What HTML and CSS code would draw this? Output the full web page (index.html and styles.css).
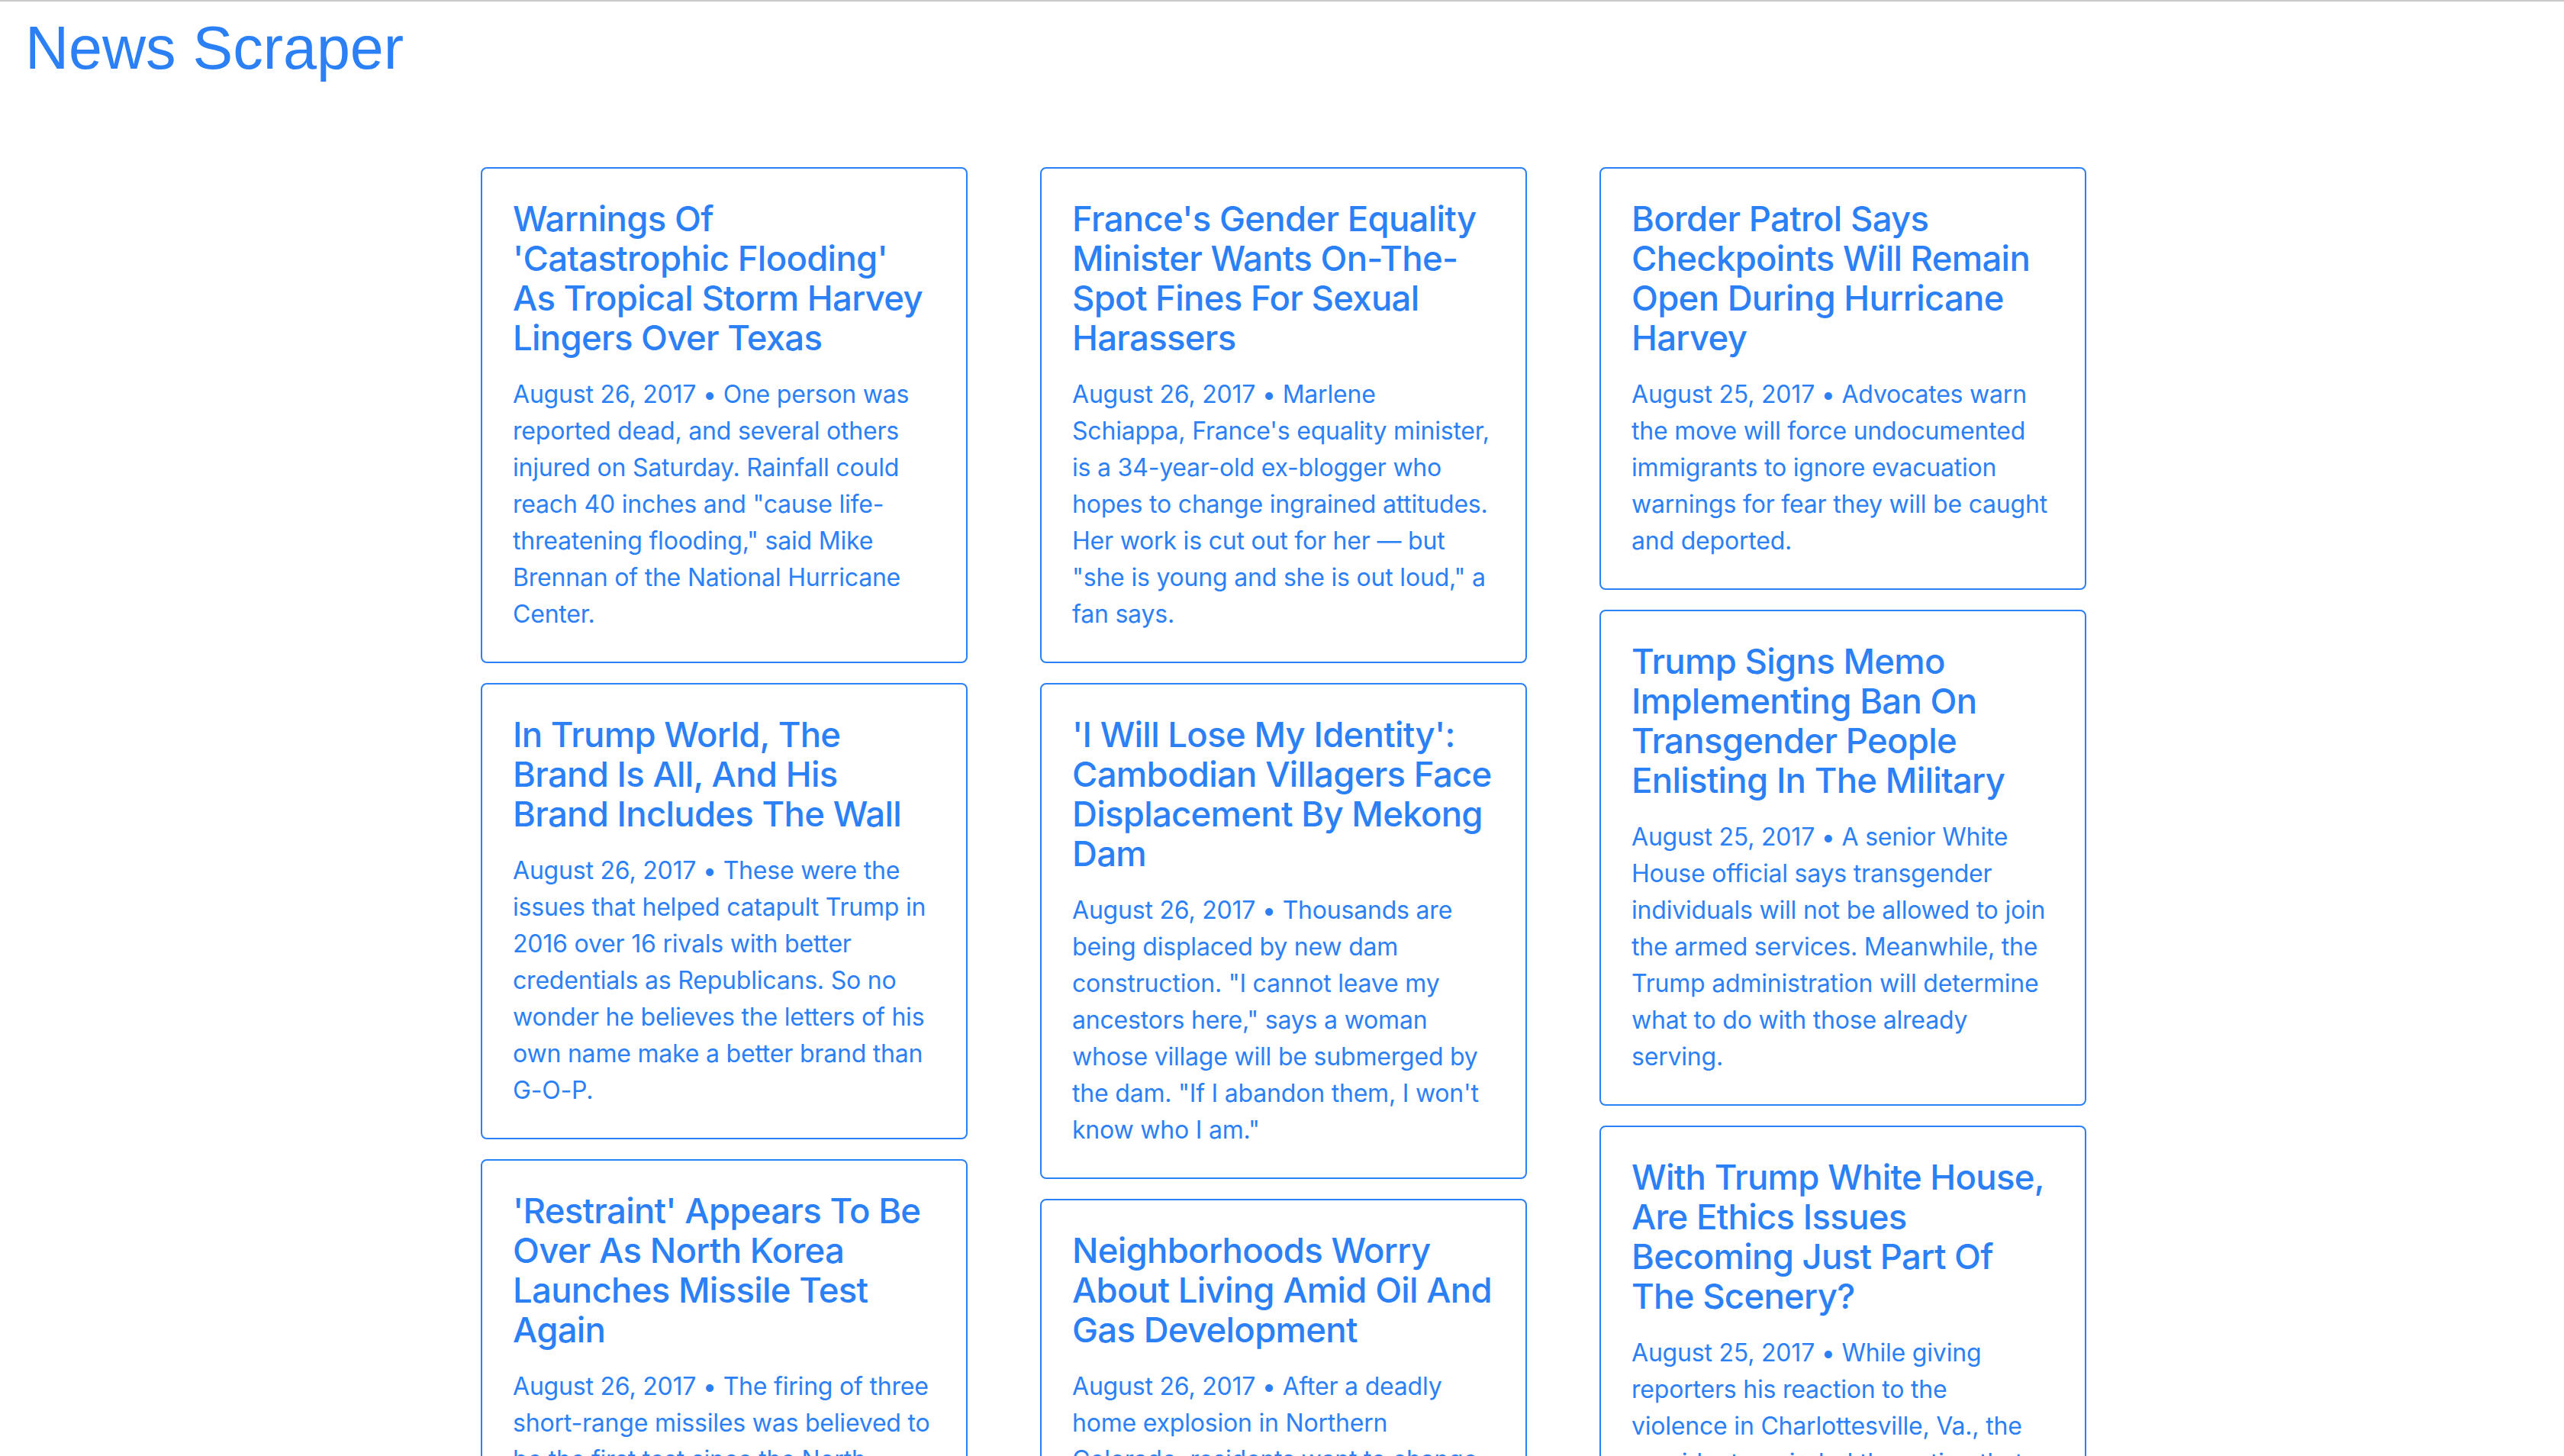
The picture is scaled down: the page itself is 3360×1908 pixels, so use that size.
FILE: index.html
```html
<!DOCTYPE html>
<html lang="en">
<head>
<meta charset="utf-8">
<title>News Scraper</title>
<link rel="stylesheet" href="styles.css">
</head>
<body>
<header class="topbar">
  <h1 class="brand">News Scraper</h1>
</header>
<main class="board">
  <div class="column">
    <article class="card">
      <h4 class="card-title">Warnings Of<br>'Catastrophic Flooding'<br>As Tropical Storm Harvey<br>Lingers Over Texas</h4>
      <p class="card-text">August 26, 2017 • One person was<br>reported dead, and several others<br>injured on Saturday. Rainfall could<br>reach 40 inches and "cause life-<br>threatening flooding," said Mike<br>Brennan of the National Hurricane<br>Center.</p>
    </article>
    <article class="card">
      <h4 class="card-title">In Trump World, The<br>Brand Is All, And His<br>Brand Includes The Wall</h4>
      <p class="card-text">August 26, 2017 • These were the<br>issues that helped catapult Trump in<br>2016 over 16 rivals with better<br>credentials as Republicans. So no<br>wonder he believes the letters of his<br>own name make a better brand than<br>G-O-P.</p>
    </article>
    <article class="card">
      <h4 class="card-title">'Restraint' Appears To Be<br>Over As North Korea<br>Launches Missile Test<br>Again</h4>
      <p class="card-text">August 26, 2017 • The firing of three<br>short-range missiles was believed to<br>be the first test since the North<br>threatened to fire missiles toward the U.S. territory of Guam.</p>
    </article>
  </div>
  <div class="column">
    <article class="card">
      <h4 class="card-title">France's Gender Equality<br>Minister Wants On-The-<br>Spot Fines For Sexual<br>Harassers</h4>
      <p class="card-text">August 26, 2017 • Marlene<br>Schiappa, France's equality minister,<br>is a 34-year-old ex-blogger who<br>hopes to change ingrained attitudes.<br>Her work is cut out for her — but<br>"she is young and she is out loud," a<br>fan says.</p>
    </article>
    <article class="card">
      <h4 class="card-title">'I Will Lose My Identity':<br>Cambodian Villagers Face<br>Displacement By Mekong<br>Dam</h4>
      <p class="card-text">August 26, 2017 • Thousands are<br>being displaced by new dam<br>construction. "I cannot leave my<br>ancestors here," says a woman<br>whose village will be submerged by<br>the dam. "If I abandon them, I won't<br>know who I am."</p>
    </article>
    <article class="card">
      <h4 class="card-title">Neighborhoods Worry<br>About Living Amid Oil And<br>Gas Development</h4>
      <p class="card-text">August 26, 2017 • After a deadly<br>home explosion in Northern<br>Colorado, residents want to change<br>how close oil and gas wells can be built to their homes.</p>
    </article>
  </div>
  <div class="column">
    <article class="card">
      <h4 class="card-title">Border Patrol Says<br>Checkpoints Will Remain<br>Open During Hurricane<br>Harvey</h4>
      <p class="card-text">August 25, 2017 • Advocates warn<br>the move will force undocumented<br>immigrants to ignore evacuation<br>warnings for fear they will be caught<br>and deported.</p>
    </article>
    <article class="card">
      <h4 class="card-title">Trump Signs Memo<br>Implementing Ban On<br>Transgender People<br>Enlisting In The Military</h4>
      <p class="card-text">August 25, 2017 • A senior White<br>House official says transgender<br>individuals will not be allowed to join<br>the armed services. Meanwhile, the<br>Trump administration will determine<br>what to do with those already<br>serving.</p>
    </article>
    <article class="card">
      <h4 class="card-title">With Trump White House,<br>Are Ethics Issues<br>Becoming Just Part Of<br>The Scenery?</h4>
      <p class="card-text">August 25, 2017 • While giving<br>reporters his reaction to the<br>violence in Charlottesville, Va., the<br>president reminded the nation that he owned a winery there.</p>
    </article>
  </div>
</main>
</body>
</html>
```

FILE: styles.css
```css
html, body {
  margin: 0;
  padding: 0;
  background: #ffffff;
}

body {
  border-top: 2px solid #c9c9c9;
  color: #2b80f6;
  font-family: "Inter", "Noto Sans", sans-serif;
}

.topbar {
  padding: 0 33px;
}

.brand {
  margin: 17px 0 0;
  font-family: "Liberation Sans", Arial, sans-serif;
  font-weight: 400;
  font-size: 79px;
  line-height: 88px;
  color: #2b80f6;
}

.board {
  display: grid;
  grid-template-columns: repeat(3, 638px);
  column-gap: 95px;
  justify-content: center;
  align-items: start;
  margin-top: 112px;
  padding-left: 4px;
}

.column {
  display: flex;
  flex-direction: column;
  gap: 26px;
}

.card {
  border: 2px solid #2b80f6;
  border-radius: 8px;
  padding: 40px 40px 38px;
}

.card-title {
  margin: 0 0 24px;
  font-size: 45.5px;
  line-height: 52px;
  font-weight: 500;
  letter-spacing: -0.7px;
}

.card-text {
  margin: 0;
  font-size: 32px;
  line-height: 48px;
  font-weight: 400;
  letter-spacing: -0.2px;
}
```
